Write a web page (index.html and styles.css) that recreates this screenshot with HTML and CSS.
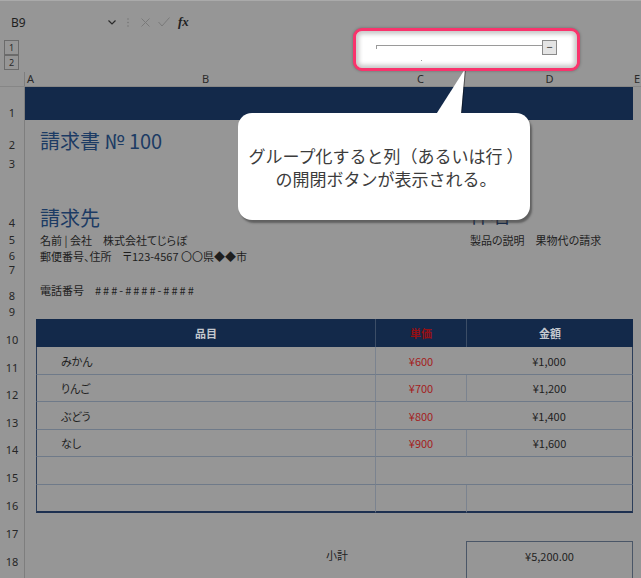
FILE: index.html
```html
<!DOCTYPE html>
<html lang="ja">
<head>
    <meta charset="UTF-8">
    <title>請求書 - グループ化</title>
    <link rel="stylesheet" href="styles.css">
</head>
<body>
<div class="window">
    <!-- formula bar -->
    <div class="formula-bar">
        <span class="name-box">B9</span>
        <svg class="chevron" width="8" height="5" viewBox="0 0 8 5"><path d="M0.5 0.5 L4 4 L7.5 0.5" fill="none" stroke="#2a2a2a" stroke-width="1.2"/></svg>
        <svg class="dots" width="2" height="9" viewBox="0 0 2 9"><circle cx="1" cy="1" r="0.8" fill="#777"/><circle cx="1" cy="4.5" r="0.8" fill="#777"/><circle cx="1" cy="8" r="0.8" fill="#777"/></svg>
        <svg class="cancel" width="9" height="9" viewBox="0 0 9 9"><path d="M0.5 0.5 L8.5 8.5 M8.5 0.5 L0.5 8.5" stroke="#7a7a7a" stroke-width="1"/></svg>
        <svg class="enter" width="12" height="10" viewBox="0 0 12 10"><path d="M0.5 5 L4 9 L11.5 0.5" fill="none" stroke="#7a7a7a" stroke-width="1"/></svg>
        <span class="fx">fx</span>
    </div>

    <!-- outline level buttons -->
    <div class="outline-bar">
        <span class="level">1</span>
        <span class="level">2</span>
    </div>

    <!-- column headings -->
    <div class="col-heads">
        <span></span><span>A</span><span>B</span><span>C</span><span>D</span><span>E</span>
    </div>

    <div class="sheet">
        <div class="row r1"><span class="rh">1</span><span class="cell band"></span></div>
        <div class="row r2"><span class="rh">2</span><span class="cell cb title">請求書 № 100</span></div>
        <div class="row r3"><span class="rh">3</span></div>
        <div class="row r4"><span class="rh">4</span><span class="cell cb heading">請求先</span><span class="cell cd heading">件名</span></div>
        <div class="row r5"><span class="rh">5</span><span class="cell cb">名前 | 会社　株式会社てじらぼ</span><span class="cell cd">製品の説明　果物代の請求</span></div>
        <div class="row r6"><span class="rh">6</span><span class="cell cb">郵便番号、住所　〒123-4567 〇〇県◆◆市</span></div>
        <div class="row r7"><span class="rh">7</span></div>
        <div class="row r8"><span class="rh">8</span><span class="cell cb mid">電話番号　<span class="phone">###-####-####</span></span></div>
        <div class="row r9"><span class="rh">9</span></div>

        <div class="row r10"><span class="rh">10</span><span class="cell cb th">品目</span><span class="cell cc th red">単価</span><span class="cell cd th">金額</span></div>
        <div class="row r11"><span class="rh">11</span><span class="cell cb td item">みかん</span><span class="cell cc td price">¥600</span><span class="cell cd td">¥1,000</span></div>
        <div class="row r12"><span class="rh">12</span><span class="cell cb td item">りんご</span><span class="cell cc td price">¥700</span><span class="cell cd td split">¥1,200</span></div>
        <div class="row r13"><span class="rh">13</span><span class="cell cb td item">ぶどう</span><span class="cell cc td price">¥800</span><span class="cell cd td">¥1,400</span></div>
        <div class="row r14"><span class="rh">14</span><span class="cell cb td item">なし</span><span class="cell cc td price">¥900</span><span class="cell cd td split">¥1,600</span></div>
        <div class="row r15"><span class="rh">15</span><span class="cell cb td"></span><span class="cell cc td"></span><span class="cell cd td"></span></div>
        <div class="row r16"><span class="rh">16</span><span class="cell cb td last"></span><span class="cell cc td last"></span><span class="cell cd td split last"></span></div>
        <div class="row r17"><span class="rh">17</span></div>
        <div class="row r18"><span class="rh">18</span><span class="cell cb mid label">小計</span><span class="cell cd mid total top">¥5,200.00</span></div>
        <div class="row r19"><span class="rh"></span><span class="cell cb label cut">消費税</span><span class="cell cd total"></span></div>
    </div>

    <!-- callout pointer -->
    <svg class="pointer" width="40" height="52" viewBox="0 0 40 52">
        <polygon points="35,3 5,50 31,50" fill="#fff"/>
        <path d="M35.5 3 L31.5 48" stroke="rgba(0,0,0,0.45)" stroke-width="1" fill="none"/>
    </svg>

    <!-- highlighted column outline -->
    <div class="group-spot">
        <span class="group-line"></span>
        <span class="collapse">−</span>
        <span class="spot-dot"></span>
    </div>

    <div class="callout">グループ化すると列（あるいは行 ）<br>の開閉ボタンが表示される。</div>
</div>
</body>
</html>
```

FILE: styles.css
```css
* {
    box-sizing: border-box;
}

body {
    margin: 0;
    background: #969696;
    font-family: "Noto Sans CJK JP", "Noto Sans", sans-serif;
    color: #1e1e1e;
    overflow: hidden;
}

.window {
    position: relative;
    width: 641px;
    height: 578px;
    overflow: hidden;
}

/* formula bar */
.formula-bar {
    height: 40px;
    padding-top: 3px;
    border-top: 1px solid #aaaaaa;
    display: flex;
    align-items: center;
}

.name-box {
    width: 97px;
    margin-left: 11px;
    font-family: "Noto Sans", sans-serif;
    font-size: 12px;
    color: #1f1f1f;
}

.dots {
    margin-left: 11px;
}

.cancel {
    margin-left: 12px;
}

.enter {
    margin-left: 8px;
}

.fx {
    margin-left: 8px;
    font-family: "Liberation Serif", serif;
    font-style: italic;
    font-weight: bold;
    font-size: 13px;
    color: #222;
}

/* outline levels */
.outline-bar {
    height: 32px;
    padding-left: 4px;
    display: flex;
    flex-direction: column;
}

.level {
    width: 15px;
    height: 15px;
    border: 1px solid #6b6b6b;
    font-family: "Noto Sans", sans-serif;
    font-size: 9px;
    line-height: 13px;
    text-align: center;
    color: #2a2a2a;
}

/* grid columns */
.col-heads,
.row {
    display: grid;
    grid-template-columns: 25px 11px 339px 91px 167px 8px;
}

.col-heads {
    height: 15px;
    border-bottom: 1px solid #868686;
    font-family: "Noto Sans", sans-serif;
    font-size: 11px;
    line-height: 14px;
    color: #2a2a2a;
    text-align: center;
}

.col-heads span:first-child {
    border-right: 1px solid #7e7e7e;
}

.r1 { height: 33px; }
.r2 { height: 32px; }
.r3 { height: 19px; }
.r4 { height: 59px; }
.r5 { height: 17px; }
.r6 { height: 16px; }
.r7 { height: 13px; }
.r8 { height: 27px; }
.r9 { height: 16px; }
.r10, .r11, .r13, .r15, .r16, .r17, .r18, .r19 { height: 28px; }
.r12, .r14 { height: 27px; }

.rh {
    grid-column: 1;
    display: flex;
    align-items: flex-end;
    justify-content: center;
    padding-bottom: 1px;
    border-right: 1px solid #7e7e7e;
    font-family: "Noto Sans", sans-serif;
    font-size: 11px;
    line-height: 13px;
    color: #262626;
}

.cell {
    display: flex;
    align-items: flex-end;
    padding: 0 4px;
    font-size: 11px;
    line-height: 14px;
    font-feature-settings: "palt";
    white-space: nowrap;
    min-width: 0;
}

.cb { grid-column: 3; }
.cc { grid-column: 4; }
.cd { grid-column: 5; }

.mid {
    align-items: center;
}

.band {
    grid-column: 2 / 6;
    background: #13294a;
}

.title {
    font-size: 20px;
    line-height: 22px;
    color: #1c3b64;
}

.heading {
    font-size: 20px;
    line-height: 24px;
    color: #1c3b64;
}

.cd.heading {
    padding-bottom: 3px;
    color: #13294a;
}

.phone {
    letter-spacing: 2px;
}

/* invoice table */
.th {
    align-items: center;
    justify-content: center;
    background: #13294a;
    color: #c4c8ce;
    font-weight: bold;
}

.cb.th {
    border-left: 1px solid #13294a;
}

.cc.th,
.cd.th {
    border-left: 1px solid #3c4d66;
}

.th.red {
    color: #950f14;
}

.td {
    align-items: center;
    justify-content: center;
    border-bottom: 1px solid #6f7a89;
}

.cb.td {
    border-left: 1px solid #2c3e5a;
}

.cc.td {
    border-left: 1px solid #7b838f;
}

.cd.td {
    border-right: 1px solid #2c3e5a;
}

.cd.split {
    border-left: 1px solid #7b838f;
}

.td.item {
    justify-content: flex-start;
    padding-left: 24px;
}

.td.price {
    color: #a41d1d;
}

.td.last {
    border-bottom: 2px solid #1d3050;
}

/* totals */
.label {
    justify-content: flex-end;
    padding-right: 27px;
}

.label.cut {
    align-items: flex-start;
    padding-top: 7px;
}

.total {
    justify-content: center;
    border-left: 1px solid #4a5667;
    border-right: 1px solid #4a5667;
}

.total.top {
    border-top: 1px solid #4a5667;
}

/* highlighted outline bar */
.group-spot {
    position: absolute;
    left: 353px;
    top: 28px;
    width: 227px;
    height: 43px;
    border: 3px solid #f9336c;
    border-radius: 9px;
    background: #fff;
    box-shadow: inset 0 0 4px 3px rgba(0, 0, 0, 0.22), 0 0 3px rgba(0, 0, 0, 0.3);
    display: flex;
    align-items: flex-start;
    padding: 9px 0 0 20px;
}

.group-line {
    width: 166px;
    height: 4px;
    margin-top: 5px;
    border-top: 1px solid #9a9a9a;
    border-left: 1px solid #9a9a9a;
}

.collapse {
    width: 15px;
    height: 15px;
    border: 1px solid #8a8a8a;
    background: #e4e4e4;
    font-family: "Noto Sans", sans-serif;
    font-size: 11px;
    line-height: 12px;
    text-align: center;
    color: #333;
}

.spot-dot {
    position: absolute;
    left: 65px;
    top: 29px;
    width: 1px;
    height: 1px;
    background: #999;
}

/* callout */
.pointer {
    position: absolute;
    left: 430px;
    top: 66px;
}

.callout {
    position: absolute;
    left: 238px;
    top: 113px;
    width: 292px;
    height: 107px;
    padding: 31px 0 0 4px;
    border-radius: 14px;
    background: #fff;
    box-shadow: 2px 3px 2px rgba(60, 60, 60, 0.6);
    font-size: 17px;
    line-height: 23px;
    color: #3c3c3c;
    text-align: center;
    white-space: nowrap;
}
```
